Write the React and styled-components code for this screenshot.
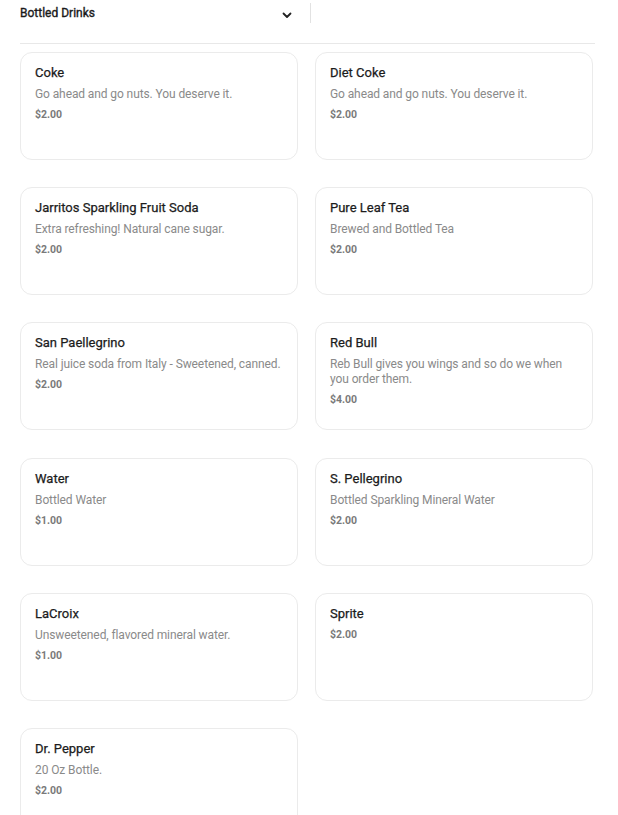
import React from 'react';
import styled, { createGlobalStyle } from 'styled-components';

const GlobalStyle = createGlobalStyle`
  body {
    margin: 0;
    background: #ffffff;
    font-family: Roboto, "Liberation Sans", Arial, sans-serif;
  }
`;

const Page = styled.div`
  width: 574px;
  padding: 3px 0 0 20px;
`;

const Header = styled.div`
  display: flex;
  align-items: center;
  height: 20px;
`;

const HeaderMain = styled.div`
  width: 291px;
  height: 20px;
  display: flex;
  align-items: center;
  justify-content: space-between;
  border-right: 1px solid #e2e2e2;
  box-sizing: border-box;
`;

const SectionTitle = styled.h2`
  margin: 0;
  font-size: 12px;
  line-height: 16px;
  font-weight: 400;
  -webkit-text-stroke: 0.35px #1a1a1a;
  color: #1a1a1a;
`;

const ToggleButton = styled.button`
  border: none;
  background: none;
  padding: 0;
  margin: 4px 18px 0 0;
  display: flex;
  color: #222;
  cursor: pointer;
`;

const Divider = styled.hr`
  margin: 20px 0 8px 0;
  border: none;
  border-top: 1px solid #e8e8e8;
  width: 575px;
`;

const Grid = styled.div`
  display: grid;
  grid-template-columns: 278px 278px;
  column-gap: 17px;
  row-gap: 27.2px;
`;

const Card = styled.div`
  height: 108px;
  box-sizing: border-box;
  border: 1px solid #ebebeb;
  border-radius: 12px;
  padding: 12px 14px;
  background: #fff;
`;

const ItemName = styled.div`
  font-size: 13px;
  line-height: 16px;
  font-weight: 400;
  -webkit-text-stroke: 0.25px #1c1c1c;
  color: #1c1c1c;
  margin-bottom: 6px;
`;

const ItemDescription = styled.div`
  font-size: 12px;
  line-height: 15px;
  letter-spacing: -0.1px;
  color: #8a8a8a;
`;

const Price = styled.div`
  margin-top: 6px;
  font-size: 10.5px;
  line-height: 14px;
  font-weight: 700;
  color: #7a7a7a;
`;

const drinks = [
  { name: 'Coke', description: 'Go ahead and go nuts. You deserve it.', price: '$2.00' },
  { name: 'Diet Coke', description: 'Go ahead and go nuts. You deserve it.', price: '$2.00' },
  { name: 'Jarritos Sparkling Fruit Soda', description: 'Extra refreshing! Natural cane sugar.', price: '$2.00' },
  { name: 'Pure Leaf Tea', description: 'Brewed and Bottled Tea', price: '$2.00' },
  { name: 'San Paellegrino', description: 'Real juice soda from Italy - Sweetened, canned.', price: '$2.00' },
  { name: 'Red Bull', description: 'Reb Bull gives you wings and so do we when you order them.', price: '$4.00' },
  { name: 'Water', description: 'Bottled Water', price: '$1.00' },
  { name: 'S. Pellegrino', description: 'Bottled Sparkling Mineral Water', price: '$2.00' },
  { name: 'LaCroix', description: 'Unsweetened, flavored mineral water.', price: '$1.00' },
  { name: 'Sprite', description: '', price: '$2.00' },
  { name: 'Dr. Pepper', description: '20 Oz Bottle.', price: '$2.00' },
];

const ChevronDown = () => (
  <svg width='10' height='7' viewBox='0 0 10 7' fill='none'>
    <path d='M1.5 1.5 L5 5 L8.5 1.5' stroke='currentColor' strokeWidth='1.8' strokeLinecap='round' strokeLinejoin='round' />
  </svg>
);

const App = () => {
  return (
    <Page>
      <GlobalStyle />
      <Header>
        <HeaderMain>
          <SectionTitle>Bottled Drinks</SectionTitle>
          <ToggleButton aria-label='Collapse section'>
            <ChevronDown />
          </ToggleButton>
        </HeaderMain>
      </Header>
      <Divider />
      <Grid>
        {drinks.map((drink) => (
          <Card key={drink.name}>
            <ItemName>{drink.name}</ItemName>
            {drink.description && <ItemDescription>{drink.description}</ItemDescription>}
            <Price>{drink.price}</Price>
          </Card>
        ))}
      </Grid>
    </Page>
  );
};

export default App;
